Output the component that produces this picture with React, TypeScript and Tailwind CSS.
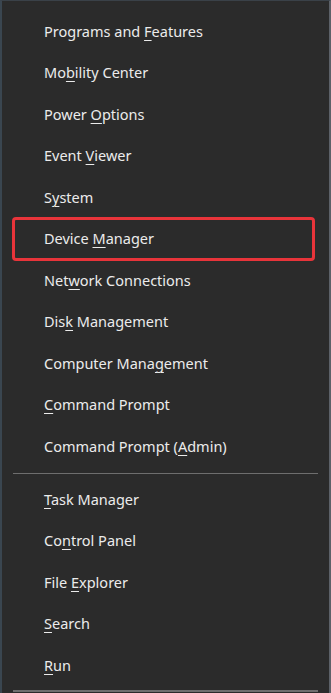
import React from "react";

type Item = { pre: string; key: string; post: string };

const group1: Item[] = [
  { pre: "Programs and ", key: "F", post: "eatures" },
  { pre: "Mo", key: "b", post: "ility Center" },
  { pre: "Power ", key: "O", post: "ptions" },
  { pre: "Event ", key: "V", post: "iewer" },
  { pre: "S", key: "y", post: "stem" },
  { pre: "Device ", key: "M", post: "anager" },
  { pre: "Net", key: "w", post: "ork Connections" },
  { pre: "Dis", key: "k", post: " Management" },
  { pre: "Computer Mana", key: "g", post: "ement" },
  { pre: "", key: "C", post: "ommand Prompt" },
  { pre: "Command Prompt (", key: "A", post: "dmin)" },
];

const group2: Item[] = [
  { pre: "", key: "T", post: "ask Manager" },
  { pre: "Co", key: "n", post: "trol Panel" },
  { pre: "File ", key: "E", post: "xplorer" },
  { pre: "", key: "S", post: "earch" },
  { pre: "", key: "R", post: "un" },
];

function Row({ item, highlight }: { item: Item; highlight?: boolean }) {
  return (
    <div className="relative h-[41.5px] flex items-center pl-[42px] text-[14.5px] text-[#ebebeb]">
      <span>
        {item.pre}
        <span className="underline underline-offset-[3px] decoration-1">{item.key}</span>
        {item.post}
      </span>
      {highlight && (
        <span className="absolute left-[10px] right-[14px] top-[-2px] bottom-[-1px] rounded-[4px] border-[3px] border-[#e8343a]" />
      )}
    </div>
  );
}

export default function App() {
  return (
    <div
      className="w-[331px] h-[693px] overflow-hidden bg-[#2b2b2b] border-l-2 border-l-[#3a4650] border-r-2 border-r-[#5c6168] border-t border-t-[#3a4148]"
      style={{ fontFamily: '"Noto Sans", "Open Sans", sans-serif' }}
    >
      <div className="pt-[10px]">
        {group1.map((it, i) => (
          <Row key={i} item={it} highlight={i === 5} />
        ))}
        <div className="h-[11.5px] flex items-center px-[11px]">
          <div className="h-px w-full bg-[#6e6e6e]" />
        </div>
        {group2.map((it, i) => (
          <Row key={i} item={it} />
        ))}
        <div className="pt-[3px] px-[11px]">
          <div className="h-[2px] w-full bg-[#6e6e6e]" />
        </div>
      </div>
    </div>
  );
}
